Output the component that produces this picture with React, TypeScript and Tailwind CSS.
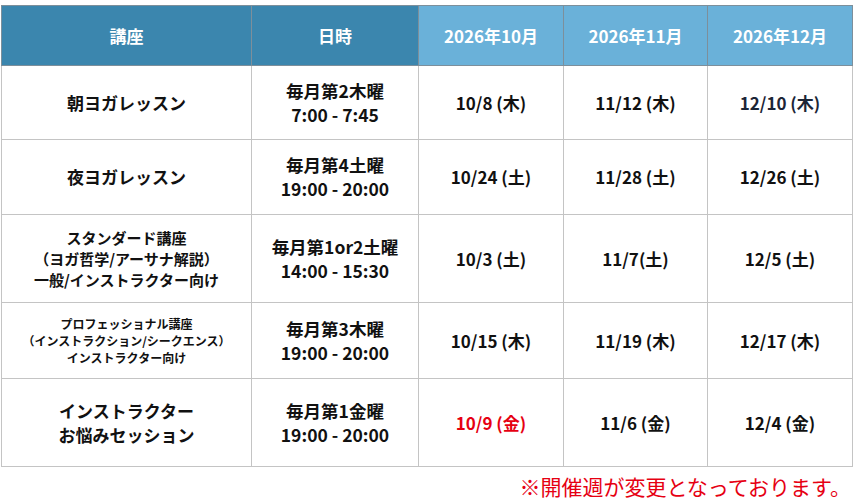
import React from 'react'

type Cell = { text: string; className?: string }

interface Row {
  course: string[]
  courseSize: string
  time: string[]
  dates: Cell[]
  height: string
}

const rows: Row[] = [
  {
    course: ['朝ヨガレッスン'],
    courseSize: 'text-[17px] leading-[24px]',
    time: ['毎月第2木曜', '7:00 - 7:45'],
    dates: [{ text: '10/8 (木)' }, { text: '11/12 (木)' }, { text: '12/10 (木)', className: 'text-[#1c2536]' }],
    height: 'h-[74px]'
  },
  {
    course: ['夜ヨガレッスン'],
    courseSize: 'text-[17px] leading-[24px]',
    time: ['毎月第4土曜', '19:00 - 20:00'],
    dates: [{ text: '10/24 (土)' }, { text: '11/28 (土)' }, { text: '12/26 (土)' }],
    height: 'h-[75px]'
  },
  {
    course: ['スタンダード講座', '（ヨガ哲学/アーサナ解説）', '一般/インストラクター向け'],
    courseSize: 'text-[15px] leading-[21px]',
    time: ['毎月第1or2土曜', '14:00 - 15:30'],
    dates: [{ text: '10/3 (土)' }, { text: '11/7(土)' }, { text: '12/5 (土)' }],
    height: 'h-[88px]'
  },
  {
    course: ['プロフェッショナル講座', '（インストラクション/シークエンス）', 'インストラクター向け'],
    courseSize: 'text-[12px] leading-[17px]',
    time: ['毎月第3木曜', '19:00 - 20:00'],
    dates: [{ text: '10/15 (木)' }, { text: '11/19 (木)' }, { text: '12/17 (木)' }],
    height: 'h-[76px]'
  },
  {
    course: ['インストラクター', 'お悩みセッション'],
    courseSize: 'text-[17px] leading-[24px]',
    time: ['毎月第1金曜', '19:00 - 20:00'],
    dates: [{ text: '10/9 (金)', className: 'text-[#e60012]' }, { text: '11/6 (金)' }, { text: '12/4 (金)' }],
    height: 'h-[88px]'
  }
]

export default function App() {
  return (
    <div
      className="w-[853px] h-[500px] bg-white pt-[5px] pl-[1px]"
      style={{ fontFamily: '"Noto Sans CJK JP", "Noto Sans", sans-serif' }}
    >
      <table className="border-collapse table-fixed w-[851px] text-[#111] font-bold">
        <colgroup>
          <col className="w-[250px]" />
          <col className="w-[167px]" />
          <col className="w-[145px]" />
          <col className="w-[144px]" />
          <col className="w-[145px]" />
        </colgroup>
        <thead>
          <tr className="h-[60px] text-white text-[17px]">
            <th className="bg-[#3b86ae] border border-[#7d8f9b]">講座</th>
            <th className="bg-[#3b86ae] border border-[#7d8f9b]">日時</th>
            <th className="bg-[#6ab1d9] border border-[#7d8f9b]">2026年10月</th>
            <th className="bg-[#6ab1d9] border border-[#7d8f9b]">2026年11月</th>
            <th className="bg-[#6ab1d9] border border-[#7d8f9b]">2026年12月</th>
          </tr>
        </thead>
        <tbody>
          {rows.map((row, i) => (
            <tr key={i} className={row.height}>
              <td className={`border border-[#c4c4c4] text-center ${row.courseSize}`}>
                {row.course.map((line) => (
                  <div key={line}>{line}</div>
                ))}
              </td>
              <td className="border border-[#c4c4c4] text-center text-[17.5px] leading-[24px]">
                {row.time.map((line) => (
                  <div key={line}>{line}</div>
                ))}
              </td>
              {row.dates.map((d) => (
                <td key={d.text} className={`border border-[#c4c4c4] text-center text-[17px] ${d.className ?? ''}`}>
                  {d.text}
                </td>
              ))}
            </tr>
          ))}
        </tbody>
      </table>
      <div className="flex justify-end pr-[2px] pt-[5px] text-[21px] leading-[28px] text-[#e60012]">
        ※開催週が変更となっております。
      </div>
    </div>
  )
}
